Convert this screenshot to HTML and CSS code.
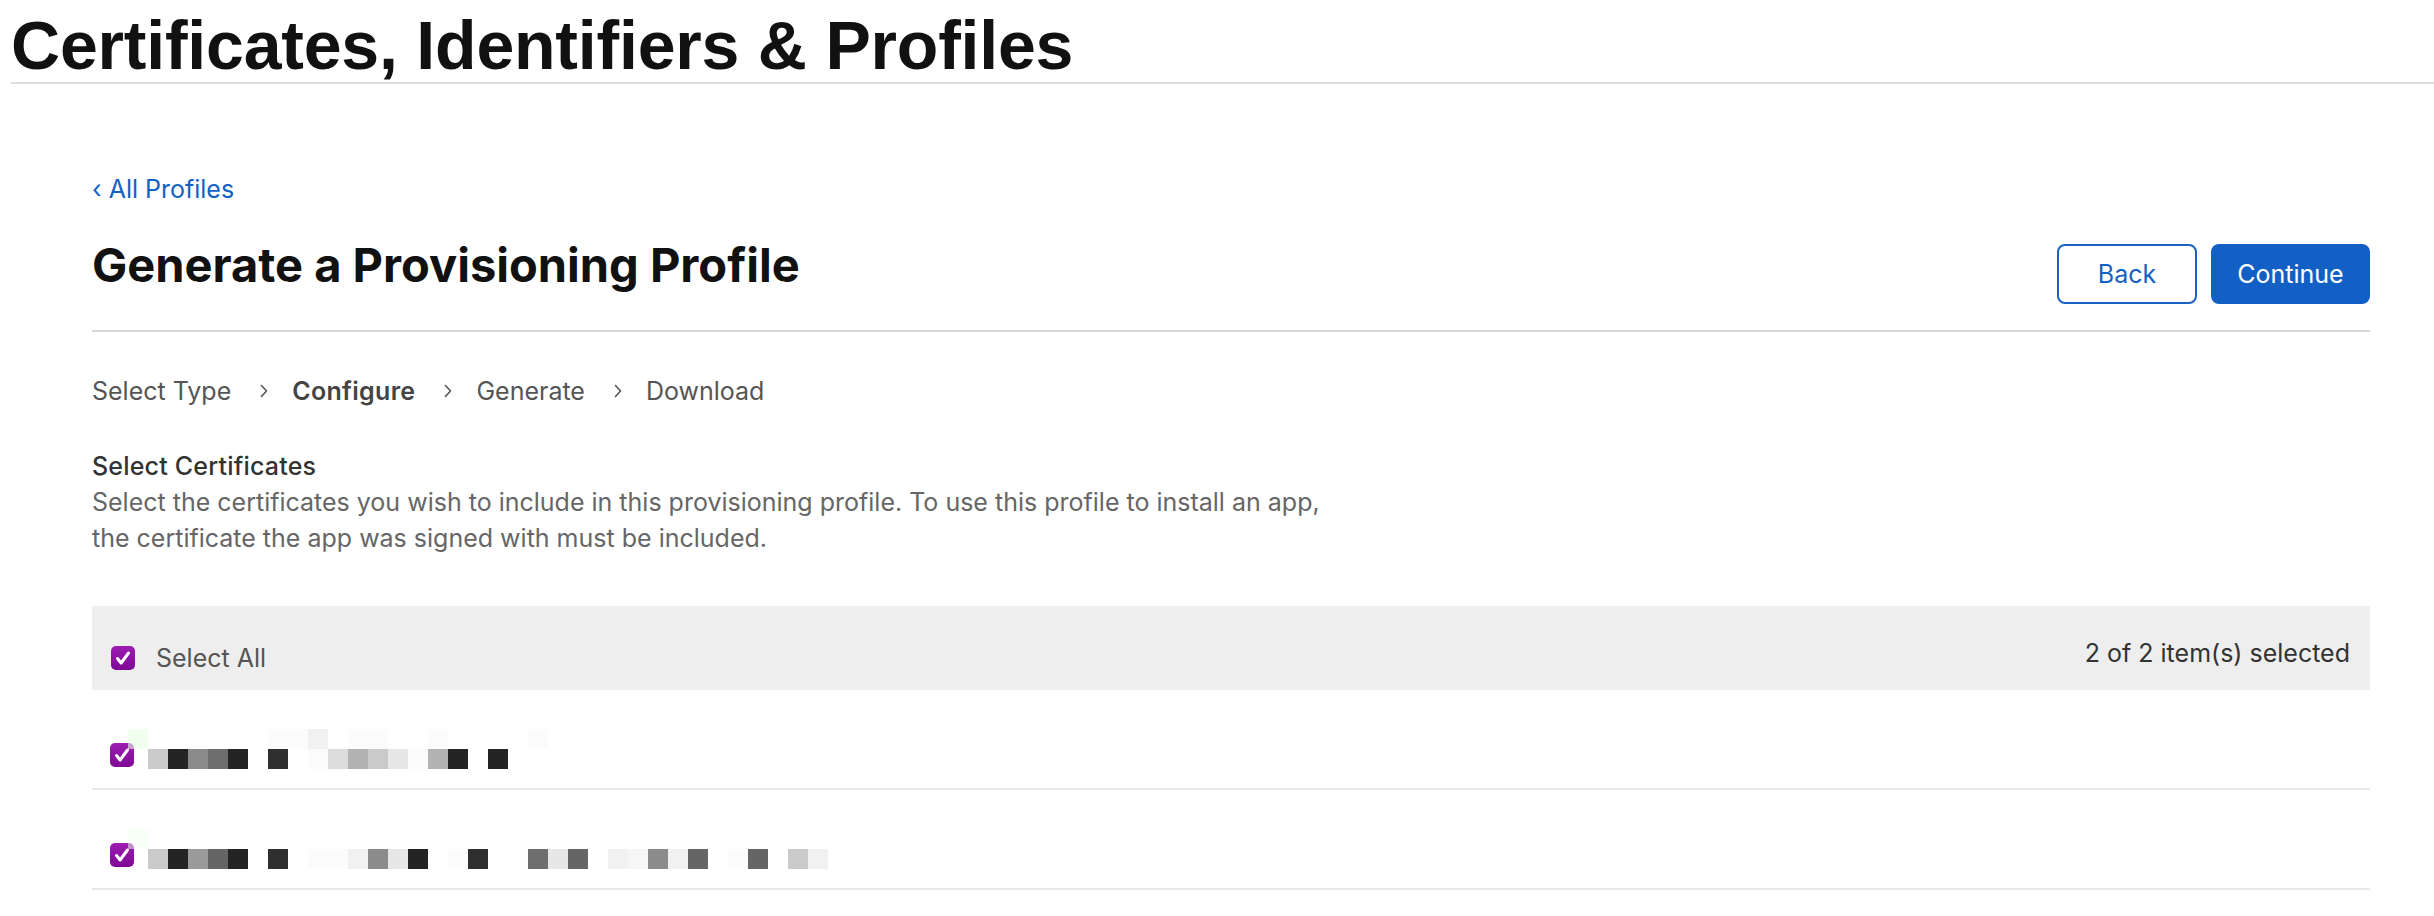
FILE: index.html
```html
<!DOCTYPE html>
<html lang="en">
<head>
<meta charset="utf-8">
<title>Certificates, Identifiers &amp; Profiles</title>
<link rel="stylesheet" href="styles.css">
</head>
<body>
<header class="site-header">
  <h1 class="site-title">Certificates, Identifiers &amp; Profiles</h1>
</header>
<main class="page">
  <a class="back-link" href="#">‹ All Profiles</a>
  <div class="title-row">
    <h2 class="page-title">Generate a Provisioning Profile</h2>
    <div class="actions">
      <button class="btn btn-outline" type="button">Back</button>
      <button class="btn btn-primary" type="button">Continue</button>
    </div>
  </div>
  <nav class="steps">
    <span class="step">Select Type</span>
    <svg class="step-sep" width="8" height="14" viewBox="0 0 8 14"><path d="M1.5 1.5l5 5.5-5 5.5" fill="none" stroke="#555" stroke-width="1.6" stroke-linecap="round" stroke-linejoin="round"/></svg>
    <span class="step current">Configure</span>
    <svg class="step-sep" width="8" height="14" viewBox="0 0 8 14"><path d="M1.5 1.5l5 5.5-5 5.5" fill="none" stroke="#555" stroke-width="1.6" stroke-linecap="round" stroke-linejoin="round"/></svg>
    <span class="step">Generate</span>
    <svg class="step-sep" width="8" height="14" viewBox="0 0 8 14"><path d="M1.5 1.5l5 5.5-5 5.5" fill="none" stroke="#555" stroke-width="1.6" stroke-linecap="round" stroke-linejoin="round"/></svg>
    <span class="step">Download</span>
  </nav>
  <section class="section">
    <h3 class="section-title">Select Certificates</h3>
    <p class="section-desc">Select the certificates you wish to include in this provisioning profile. To use this profile to install an app,<br>the certificate the app was signed with must be included.</p>
  </section>
  <div class="table">
    <div class="table-head">
      <label class="select-all">
        <span class="checkbox"><svg width="20" height="20" viewBox="0 0 20 20"><path d="M4.5 10.5l3.6 4.5 7.4-10" fill="none" stroke="#fff" stroke-width="3" stroke-linecap="round" stroke-linejoin="round"/></svg></span>
        <span>Select All</span>
      </label>
      <span class="count">2 of 2 item(s) selected</span>
    </div>
    <div class="table-row">
      <span class="checkbox"><svg width="20" height="20" viewBox="0 0 20 20"><path d="M4.5 10.5l3.6 4.5 7.4-10" fill="none" stroke="#fff" stroke-width="3" stroke-linecap="round" stroke-linejoin="round"/></svg></span>
      <div class="mosaic">
        <div class="mrow">
          <span class="gr"></span><span></span><span></span><span></span><span></span><span></span><span></span><span class="gz"></span><span class="gz"></span><span class="gf"></span><span></span><span class="gz"></span><span class="gz"></span><span></span><span></span><span class="gz"></span><span></span><span></span><span></span><span></span><span class="gz"></span>
        </div>
        <div class="mrow">
          <span></span><span class="gc"></span><span class="k"></span><span class="g8"></span><span class="g7"></span><span class="k"></span><span></span><span class="d"></span><span></span><span class="gz"></span><span class="gd"></span><span class="gb"></span><span class="gc"></span><span class="ge"></span><span class="gz"></span><span class="gb"></span><span class="k"></span><span></span><span class="k"></span>
        </div>
      </div>
    </div>
    <div class="table-row">
      <span class="checkbox"><svg width="20" height="20" viewBox="0 0 20 20"><path d="M4.5 10.5l3.6 4.5 7.4-10" fill="none" stroke="#fff" stroke-width="3" stroke-linecap="round" stroke-linejoin="round"/></svg></span>
      <div class="mosaic">
        <div class="mrow">
          <span class="gr2"></span>
        </div>
        <div class="mrow">
          <span></span><span class="gc"></span><span class="k"></span><span class="g9"></span><span class="g6"></span><span class="k"></span><span></span><span class="d"></span><span></span><span class="gz"></span><span class="gz"></span><span class="gf"></span><span class="g8"></span><span class="ge"></span><span class="k"></span><span></span><span class="gz"></span><span class="d"></span><span></span><span></span><span class="g7"></span><span class="ge"></span><span class="g6"></span><span></span><span class="gf"></span><span class="gx"></span><span class="g8"></span><span class="gf"></span><span class="g6"></span><span></span><span class="gz"></span><span class="g6"></span><span></span><span class="gc"></span><span class="gf"></span>
        </div>
      </div>
    </div>
  </div>
</main>
</body>
</html>
```

FILE: styles.css
```css
body {
  margin: 0;
  background: #fff;
  font-family: Inter, "Noto Sans", sans-serif;
  color: #333;
}

.site-header {
  margin-left: 11px;
  padding-top: 11px;
  padding-bottom: 3px;
  border-bottom: 2px solid #dedede;
}

.site-title {
  margin: 0;
  font: bold 68px/68px "Liberation Sans", Arial, sans-serif;
  letter-spacing: -0.2px;
  color: #111;
}

.page {
  margin: 87px 64px 0 92px;
}

.back-link {
  display: block;
  font-size: 25px;
  line-height: 36px;
  color: #1461c4;
  text-decoration: none;
}

.title-row {
  display: flex;
  justify-content: space-between;
  align-items: flex-start;
  margin-top: 30px;
  padding-bottom: 26px;
  border-bottom: 2px solid #d6d6d6;
}

.page-title {
  margin: 0;
  font-size: 47px;
  line-height: 56px;
  font-weight: 700;
  color: #111;
}

.actions {
  display: flex;
  gap: 14px;
  margin-top: 7px;
}

.btn {
  height: 60px;
  box-sizing: border-box;
  border-radius: 8px;
  padding: 0;
  font-family: Inter, "Noto Sans", sans-serif;
  font-size: 25px;
}

.btn-outline {
  width: 140px;
  border: 2px solid #1a62c4;
  background: #fff;
  color: #1461c4;
}

.btn-primary {
  width: 159px;
  border: none;
  background: #1260c5;
  color: #fff;
}

.steps {
  display: flex;
  align-items: center;
  margin-top: 41px;
  font-size: 25px;
  line-height: 36px;
  color: #555;
}

.step-sep {
  margin: 0 24px 0 29px;
  flex: none;
}

.step.current {
  font-weight: 600;
  letter-spacing: 0.3px;
  color: #444;
}

.section-title {
  margin: 39px 0 0;
  font-size: 25px;
  line-height: 36px;
  font-weight: 500;
  letter-spacing: 0.2px;
  color: #333;
}

.section-desc {
  margin: 0;
  font-size: 25px;
  line-height: 36px;
  color: #666;
}

.table {
  margin-top: 50px;
}

.table-head {
  display: flex;
  justify-content: space-between;
  align-items: flex-start;
  height: 84px;
  box-sizing: border-box;
  padding: 29px 20px 0 19px;
  background: #eee;
}

.select-all {
  display: flex;
  align-items: center;
  gap: 21px;
  margin-top: 5px;
  font-size: 25px;
  line-height: 36px;
  color: #555;
}

.count {
  font-size: 25px;
  line-height: 36px;
  color: #333;
}

.checkbox {
  width: 24px;
  height: 24px;
  flex: none;
  border-radius: 5px;
  background: linear-gradient(#9d1db0, #7e0896);
  display: flex;
  align-items: center;
  justify-content: center;
}

.table-row {
  display: flex;
  align-items: flex-start;
  height: 100px;
  box-sizing: border-box;
  padding: 39px 0 0 18px;
  border-bottom: 2px solid #e8e8e8;
}

.table-row .checkbox {
  margin-top: 14px;
}

.mosaic {
  margin-left: -6px;
  display: flex;
  flex-direction: column;
}

.mrow {
  display: flex;
  height: 20px;
}

.mrow span {
  width: 20px;
  height: 20px;
  flex: none;
}

.mrow .k { background: #242424; }
.mrow .d { background: #2f2f2f; }
.mrow .g6 { background: #656565; }
.mrow .g7 { background: #6e6e6e; }
.mrow .g8 { background: #8b8b8b; }
.mrow .g9 { background: #9a9a9a; }
.mrow .gb { background: #b3b3b3; }
.mrow .gc { background: #cacaca; }
.mrow .gd { background: #dcdcdc; }
.mrow .ge { background: #e7e7e7; }
.mrow .gf { background: #f1f1f1; }
.mrow .gx { background: #f6f6f6; }
.mrow .gz { background: #fbfbfb; }
.mrow .gr { background: rgba(232, 255, 226, 0.6); }
.mrow .gr2 { background: rgba(240, 255, 240, 0.5); }
```
